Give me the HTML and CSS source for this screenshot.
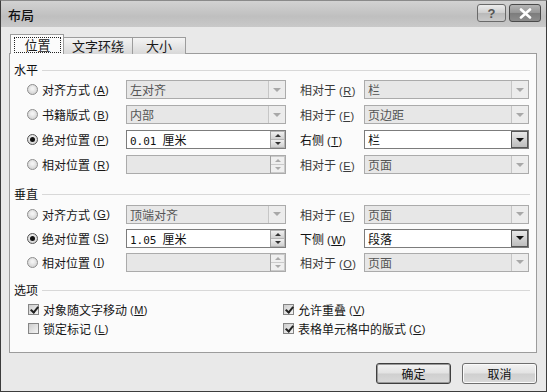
FILE: index.html
```html
<!DOCTYPE html>
<html lang="zh-CN">
<head>
<meta charset="utf-8">
<title>布局</title>
<link rel="stylesheet" href="styles.css">
</head>
<body>
<div class="window">
  <div class="titlebar">
    <span class="title">布局</span>
    <div class="tbtns">
      <div class="tbtn help">?</div>
      <div class="tbtn close"><svg width="13" height="11" viewBox="0 0 13 11"><path d="M2 1.5 L11 9.5 M11 1.5 L2 9.5" stroke="#fff" stroke-width="2.6" stroke-linecap="round"/></svg></div>
    </div>
  </div>
  <div class="body">
    <div class="tabs">
      <div class="tab active"><span class="focus">位置</span></div>
      <div class="tab">文字环绕</div>
      <div class="tab">大小</div>
    </div>
    <div class="panel">
      <div class="group first"><span>水平</span><i></i></div>
      <div class="row">
        <span class="opt"><span class="radio"></span>对齐方式<span class="acc">(<u>A</u>)</span></span>
        <div class="combo dis"><span class="val">左对齐</span><span class="arrow"></span></div>
        <span class="lbl">相对于<span class="acc">(<u>R</u>)</span></span>
        <div class="combo dis"><span class="val">栏</span><span class="arrow"></span></div>
      </div>
      <div class="row">
        <span class="opt"><span class="radio"></span>书籍版式<span class="acc">(<u>B</u>)</span></span>
        <div class="combo dis"><span class="val">内部</span><span class="arrow"></span></div>
        <span class="lbl">相对于<span class="acc">(<u>F</u>)</span></span>
        <div class="combo dis"><span class="val">页边距</span><span class="arrow"></span></div>
      </div>
      <div class="row">
        <span class="opt"><span class="radio on"></span>绝对位置<span class="acc">(<u>P</u>)</span></span>
        <div class="combo spin"><span class="val"><span class="num">0.01</span>厘米</span><span class="spinbtn"><i class="up"></i><i class="dn"></i></span></div>
        <span class="lbl en">右侧<span class="acc">(<u>T</u>)</span></span>
        <div class="combo"><span class="val">栏</span><span class="arrow"></span></div>
      </div>
      <div class="row">
        <span class="opt"><span class="radio"></span>相对位置<span class="acc">(<u>R</u>)</span></span>
        <div class="combo spin dis"><span class="val"></span><span class="spinbtn"><i class="up"></i><i class="dn"></i></span></div>
        <span class="lbl">相对于<span class="acc">(<u>E</u>)</span></span>
        <div class="combo dis"><span class="val">页面</span><span class="arrow"></span></div>
      </div>

      <div class="group second"><span>垂直</span><i></i></div>
      <div class="row v">
        <span class="opt"><span class="radio"></span>对齐方式<span class="acc">(<u>G</u>)</span></span>
        <div class="combo dis"><span class="val">顶端对齐</span><span class="arrow"></span></div>
        <span class="lbl">相对于<span class="acc">(<u>E</u>)</span></span>
        <div class="combo dis"><span class="val">页面</span><span class="arrow"></span></div>
      </div>
      <div class="row v">
        <span class="opt"><span class="radio on"></span>绝对位置<span class="acc">(<u>S</u>)</span></span>
        <div class="combo spin"><span class="val"><span class="num">1.05</span>厘米</span><span class="spinbtn"><i class="up"></i><i class="dn"></i></span></div>
        <span class="lbl en">下侧<span class="acc">(<u>W</u>)</span></span>
        <div class="combo"><span class="val">段落</span><span class="arrow"></span></div>
      </div>
      <div class="row v">
        <span class="opt"><span class="radio"></span>相对位置<span class="acc">(<u>I</u>)</span></span>
        <div class="combo spin dis"><span class="val"></span><span class="spinbtn"><i class="up"></i><i class="dn"></i></span></div>
        <span class="lbl">相对于<span class="acc">(<u>O</u>)</span></span>
        <div class="combo dis"><span class="val">页面</span><span class="arrow"></span></div>
      </div>

      <div class="group third"><span>选项</span><i></i></div>
      <div class="checks">
        <span class="chk"><span class="box on"></span>对象随文字移动<span class="acc">(<u>M</u>)</span></span>
        <span class="chk"><span class="box on"></span>允许重叠<span class="acc">(<u>V</u>)</span></span>
        <span class="chk"><span class="box"></span>锁定标记<span class="acc">(<u>L</u>)</span></span>
        <span class="chk"><span class="box on"></span>表格单元格中的版式<span class="acc">(<u>C</u>)</span></span>
      </div>
    </div>
    <div class="actions">
      <div class="btn default">确定</div>
      <div class="btn">取消</div>
    </div>
  </div>
</div>
</body>
</html>
```
FILE: styles.css
```css
* { box-sizing: border-box; }
html, body {
  margin: 0;
  padding: 0;
  width: 547px;
  height: 392px;
  overflow: hidden;
  background: #fff;
}
body {
  font-family: "Noto Sans CJK SC", "Noto Sans", sans-serif;
  font-size: 12px;
  color: #161616;
}
.window {
  width: 547px;
  height: 392px;
  border: 1px solid #3c3c3c;
  border-top-color: #8a8a8a;
  background: #e9e9e9;
  display: flex;
  flex-direction: column;
}
.titlebar {
  height: 26px;
  flex: none;
  display: flex;
  align-items: center;
  justify-content: space-between;
  padding: 0 5px 0 7px;
  background: linear-gradient(#d2d2d2, #bfbfbf 60%, #c9c9c9);
}
.title {
  font-size: 13px;
  color: #111;
  line-height: 1;
  font-weight: 500;
}
.tbtns {
  display: flex;
  gap: 3px;
  align-self: flex-start;
  margin-top: 3px;
}
.tbtn {
  height: 18px;
  border: 1px solid #6a6a6a;
  border-radius: 3px;
  display: flex;
  align-items: center;
  justify-content: center;
}
.help {
  width: 29px;
  background: linear-gradient(#ececec, #cdcdcd 50%, #b9b9b9 51%, #c9c9c9);
  font-family: "Liberation Sans", sans-serif;
  font-weight: bold;
  font-size: 13px;
  color: #555;
}
.close {
  width: 32px;
  border-color: #4a4a4a;
  background: linear-gradient(#b4b4b4, #959595 50%, #7c7c7c 51%, #8c8c8c);
}
.body {
  flex: 1;
  display: flex;
  flex-direction: column;
  padding: 0 9px 0 8px;
}
.tabs {
  height: 27px;
  flex: none;
  display: flex;
  align-items: flex-end;
  padding-left: 1px;
  margin-bottom: -1px;
  position: relative;
  z-index: 1;
}
.tab {
  height: 17px;
  border: 1px solid #9c9c9c;
  border-bottom: none;
  border-left: none;
  background: linear-gradient(#f4f4f4, #d8d8d8);
  line-height: 16px;
  font-size: 13px;
  color: #1a1a1a;
  white-space: nowrap;
  text-align: center;
}
.tab.active {
  height: 20px;
  width: 54px;
  border-left: 1px solid #9c9c9c;
  background: #fbfbfb;
  padding: 2px 2px 0 3px;
}
.tab:nth-child(2) { width: 69px; }
.tab:nth-child(3) { width: 53px; }
.focus {
  display: block;
  height: 16px;
  border: 1px dotted #222;
  text-align: center;
  line-height: 14px;
}
.panel {
  height: 300px;
  flex: none;
  background: #fbfbfb;
  border: 1px solid #9c9c9c;
  padding: 8px 0 0 0;
}
.group {
  height: 15px;
  display: flex;
  align-items: center;
  gap: 4px;
  padding: 0 6px 0 4px;
  color: #111;
}
.group i {
  flex: 1;
  height: 1px;
  background: #d8d8d8;
  margin-top: 1px;
}
.group.second { margin-top: 9px; margin-bottom: 1px; }
.group.third { margin-top: 8px; margin-bottom: 3px; }
.row {
  height: 25px;
  display: grid;
  grid-template-columns: 99px 160px 78px 165px;
  align-items: center;
  padding-left: 17px;
}
.row.v { height: 24px; }
.opt, .chk {
  display: flex;
  align-items: center;
  white-space: nowrap;
  color: #161616;
}
.radio {
  width: 11px;
  height: 11px;
  border-radius: 50%;
  border: 1px solid #8d8d8d;
  background: radial-gradient(circle at 50% 40%, #f2f2f2 15%, #c8c8c8 100%);
  margin: 0 4px 0 0;
  flex: none;
  display: flex;
  align-items: center;
  justify-content: center;
}
.radio.on { border-color: #555; }
.radio.on::after {
  content: "";
  width: 5px;
  height: 5px;
  border-radius: 50%;
  background: #111;
}
.acc {
  font-family: "Liberation Sans", sans-serif;
  font-size: 11px;
  margin-left: 3px;
  letter-spacing: 0.5px;
}
.acc u { text-decoration-thickness: 1px; text-underline-offset: 1px; }
.lbl {
  padding-left: 14px;
  color: #3a3a3a;
  white-space: nowrap;
}
.lbl.en { color: #111; }
.combo {
  height: 19px;
  border: 1px solid #7c7c7c;
  background: #fff;
  display: flex;
  align-items: stretch;
}
.combo.dis {
  border-color: #ababab;
  background: #e7e7e7;
}
.val {
  flex: 1;
  padding-left: 3px;
  line-height: 17px;
  color: #111;
  white-space: nowrap;
}
.combo.dis .val { color: #555; }
.num {
  font-family: "DejaVu Sans Mono", monospace;
  font-size: 11px;
  margin-right: 6px;
}
.arrow {
  width: 17px;
  flex: none;
  border: 1px solid #555;
  background: linear-gradient(#e8e8e8, #bdbdbd);
  display: flex;
  align-items: center;
  justify-content: center;
}
.arrow::after {
  content: "";
  border-left: 4px solid transparent;
  border-right: 4px solid transparent;
  border-top: 4px solid #111;
}
.combo.dis .arrow {
  border: none;
  border-left: 1px solid #c6c6c6;
  background: #ececec;
}
.combo.dis .arrow::after { border-top-color: #a8a8a8; }
.spinbtn {
  width: 15px;
  flex: none;
  display: flex;
  flex-direction: column;
  border-left: 1px solid #a0a0a0;
}
.spinbtn i {
  flex: 1;
  display: flex;
  align-items: center;
  justify-content: center;
  background: linear-gradient(#f0f0f0, #d0d0d0);
  border: 1px solid #b4b4b4;
  border-left: none;
}
.spinbtn i.dn { border-top: none; }
.spinbtn i.up::after {
  content: "";
  border-left: 3px solid transparent;
  border-right: 3px solid transparent;
  border-bottom: 3px solid #333;
}
.spinbtn i.dn::after {
  content: "";
  border-left: 3px solid transparent;
  border-right: 3px solid transparent;
  border-top: 3px solid #333;
}
.combo.dis .spinbtn i { background: #efefef; border-color: #cacaca; }
.combo.dis .spinbtn i.up::after { border-bottom-color: #aaa; }
.combo.dis .spinbtn i.dn::after { border-top-color: #aaa; }
.checks {
  display: grid;
  grid-template-columns: 255px auto;
  grid-auto-rows: 19px;
  align-items: center;
  padding-left: 18px;
}
.box {
  width: 11px;
  height: 11px;
  border: 1px solid #858585;
  background: linear-gradient(135deg, #cdcdcd, #f4f4f4);
  margin-right: 4px;
  flex: none;
  position: relative;
}
.box.on::after {
  content: "";
  position: absolute;
  left: 2.5px;
  top: 0px;
  width: 3px;
  height: 6px;
  border-right: 2px solid #222;
  border-bottom: 2px solid #222;
  transform: rotate(40deg);
}
.actions {
  display: flex;
  justify-content: flex-end;
  gap: 11px;
  margin-top: 10px;
}
.btn {
  width: 75px;
  height: 21px;
  border: 1px solid #6e6e6e;
  border-radius: 3px;
  background: linear-gradient(#f3f3f3, #e2e2e2 48%, #cfcfcf 52%, #d9d9d9);
  display: flex;
  align-items: center;
  justify-content: center;
  font-size: 12px;
  color: #111;
  box-shadow: inset 0 0 0 1px #fafafa;
}
.btn.default {
  border-color: #3f3f3f;
  box-shadow: inset 0 0 0 1px #9a9a9a;
}
```
